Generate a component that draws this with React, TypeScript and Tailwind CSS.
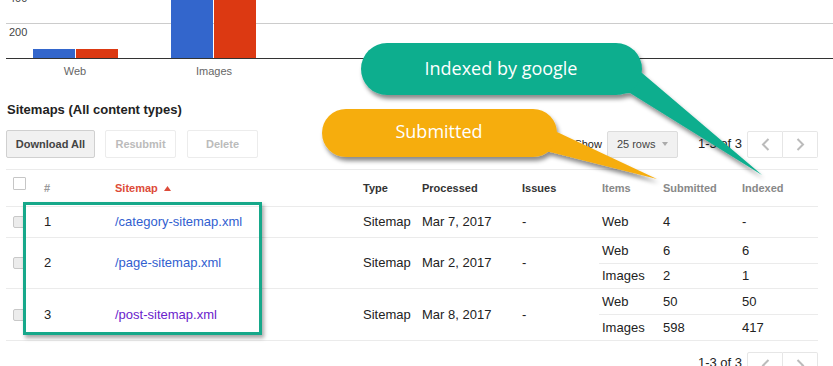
import React from "react";

type Row = {
  n: number;
  path: string;
  date: string;
  items: [string, string, string][];
  height: string;
  visited?: boolean;
};

const rows: Row[] = [
  { n: 1, path: "/category-sitemap.xml", date: "Mar 7, 2017", items: [["Web", "4", "-"]], height: "h-[31px]" },
  {
    n: 2,
    path: "/page-sitemap.xml",
    date: "Mar 2, 2017",
    items: [
      ["Web", "6", "6"],
      ["Images", "2", "1"],
    ],
    height: "h-[51px]",
  },
  {
    n: 3,
    path: "/post-sitemap.xml",
    date: "Mar 8, 2017",
    items: [
      ["Web", "50", "50"],
      ["Images", "598", "417"],
    ],
    height: "h-[52px]",
    visited: true,
  },
];

const cols = "grid grid-cols-[38px_71px_248px_59px_100px_77px_1fr]";

function Chart() {
  return (
    <svg width="833" height="84" className="block">
      <text x="9" y="2" className="fill-[#444] text-[11px]">400</text>
      <line x1="6" y1="23.5" x2="833" y2="23.5" stroke="#cccccc" />
      <text x="9" y="36" className="fill-[#444] text-[11px]">200</text>
      <rect x="33" y="49" width="42" height="9" fill="#3366cc" />
      <rect x="76" y="49" width="42" height="9" fill="#dc3912" />
      <rect x="171" y="-10" width="42" height="68" fill="#3366cc" />
      <rect x="214" y="-10" width="42" height="68" fill="#dc3912" />
      <line x1="6" y1="58.5" x2="833" y2="58.5" stroke="#333333" />
      <text x="75" y="75" textAnchor="middle" className="fill-[#666] text-[11px]">Web</text>
      <text x="214" y="75" textAnchor="middle" className="fill-[#666] text-[11px]">Images</text>
    </svg>
  );
}

function Chevron({ dir }: { dir: "left" | "right" }) {
  return (
    <svg width="9" height="13" viewBox="0 0 9 13" fill="none" stroke="#bbbbbb" strokeWidth="2">
      {dir === "left" ? <path d="M7.5 1 L2 6.5 L7.5 12" /> : <path d="M1.5 1 L7 6.5 L1.5 12" />}
    </svg>
  );
}

function Pager() {
  return (
    <div className="flex h-[27px]">
      <button className="flex w-[36px] items-center justify-center rounded-l-[2px] border border-[#e6e6e6] bg-white">
        <Chevron dir="left" />
      </button>
      <button className="flex w-[35px] items-center justify-center rounded-r-[2px] border border-l-0 border-[#e6e6e6] bg-white">
        <Chevron dir="right" />
      </button>
    </div>
  );
}

function Callouts() {
  return (
    <svg width="833" height="366" className="pointer-events-none absolute left-0 top-0">
      <defs>
        <filter id="shadow" x="-20%" y="-40%" width="140%" height="180%">
          <feDropShadow dx="2" dy="4" stdDeviation="2.2" floodColor="#000" floodOpacity="0.45" />
        </filter>
      </defs>
      <g filter="url(#shadow)">
        <path d="M600 70 L642 73 L762 175 L630 93 L600 95 Z" fill="#0aae8e" />
        <rect x="361" y="43" width="281" height="52" rx="26" fill="#0aae8e" />
      </g>
      <text
        x="501"
        y="70"
        textAnchor="middle"
        dominantBaseline="middle"
        className="fill-white font-['Open_Sans',sans-serif] text-[18px]"
      >
        Indexed by google
      </text>
      <g filter="url(#shadow)">
        <path d="M530 128 L557 132 L657 179 L550 152 L530 152 Z" fill="#f6ad0f" />
        <rect x="322" y="109" width="235" height="48" rx="24" fill="#f6ad0f" />
      </g>
      <text
        x="439"
        y="133"
        textAnchor="middle"
        dominantBaseline="middle"
        className="fill-white font-['Open_Sans',sans-serif] text-[18px]"
      >
        Submitted
      </text>
    </svg>
  );
}

export default function App() {
  return (
    <div className="relative h-[366px] w-[833px] overflow-hidden bg-white font-['Liberation_Sans',Arial,sans-serif] text-[#222]">
      <Chart />

      <div className="pl-[6px] pr-[15px]">
        <h2 className="mt-[18px] pl-[1px] text-[13px] font-bold leading-[15px] text-[#222]">
          Sitemaps (All content types)
        </h2>

        <div className="mt-[13px] flex items-center justify-between">
          <div className="flex items-center">
            <button className="h-[28px] w-[89px] rounded-[2px] border border-[#d0d0d0] bg-[#f1f1f1] text-[11px] font-bold text-[#444]">
              Download All
            </button>
            <button className="ml-[10px] h-[28px] w-[71px] rounded-[2px] border border-[#ececec] bg-white text-[11px] font-bold text-[#bbb]">
              Resubmit
            </button>
            <button className="ml-[11px] h-[28px] w-[71px] rounded-[2px] border border-[#ececec] bg-white text-[11px] font-bold text-[#bbb]">
              Delete
            </button>
          </div>
          <div className="flex items-center">
            <span className="text-[11px] text-[#222]">Show</span>
            <div className="ml-[5px] flex h-[27px] w-[71px] items-center rounded-[2px] border border-[#dcdcdc] bg-[#f1f1f1] pl-[9px] text-[11px] text-[#444]">
              25 rows
              <svg width="6" height="4" viewBox="0 0 6 4" className="ml-[7px]">
                <path d="M0 0 L6 0 L3 4 Z" fill="#aaaaaa" />
              </svg>
            </div>
            <span className="ml-[20px] mr-[5px] text-[13px] text-[#222]">1-3 of 3</span>
            <Pager />
          </div>
        </div>

        <div className="mt-[11px]">
          <div className={`${cols} h-[38px] items-center border-y border-[#ebebeb] text-[11px] font-bold`}>
            <div className="pl-[7px]">
              <div className="mb-[9px] h-[13px] w-[13px] rounded-[1px] border border-[#c6c6c6] bg-white" />
            </div>
            <div className="text-[#999]">#</div>
            <div className="flex items-center text-[#dd4b39]">
              Sitemap
              <svg width="7" height="5" viewBox="0 0 7 5" className="ml-[6px]">
                <path d="M0 5 L3.5 0 L7 5 Z" fill="#dd4b39" />
              </svg>
            </div>
            <div className="text-[#333]">Type</div>
            <div className="text-[#333]">Processed</div>
            <div className="text-[#333]">Issues</div>
            <div className="grid grid-cols-[61px_79px_1fr] pl-[3px] text-[#888]">
              <span>Items</span>
              <span>Submitted</span>
              <span>Indexed</span>
            </div>
          </div>

          {rows.map((row) => (
            <div key={row.n} className={`${cols} ${row.height} items-center border-b border-[#ebebeb] text-[13px]`}>
              <div className="pl-[7px]">
                <div className="h-[12px] w-[13px] rounded-[2px] border border-[#c8c8c8] bg-[#ececec]" />
              </div>
              <div>{row.n}</div>
              <div className={row.visited ? "text-[#6a22cc]" : "text-[#3160d0]"}>{row.path}</div>
              <div>Sitemap</div>
              <div>{row.date}</div>
              <div>-</div>
              <div className="flex h-full flex-col">
                {row.items.map(([kind, sub, idx], i) => (
                  <div
                    key={kind}
                    className={`grid flex-1 grid-cols-[61px_79px_1fr] items-center pl-[3px] ${
                      i < row.items.length - 1 ? "border-b border-[#ebebeb]" : ""
                    }`}
                  >
                    <span>{kind}</span>
                    <span>{sub}</span>
                    <span>{idx}</span>
                  </div>
                ))}
              </div>
            </div>
          ))}
        </div>

        <div className="mt-[11px] flex items-start justify-end">
          <span className="mr-[5px] mt-[3px] text-[13px] leading-[15px] text-[#222]">1-3 of 3</span>
          <Pager />
        </div>
      </div>

      <div className="pointer-events-none absolute left-[23px] top-[202px] h-[133px] w-[239px] border-[3px] border-[#16a88a] shadow-[2px_3px_4px_rgba(0,0,0,0.35)]" />

      <Callouts />
    </div>
  );
}
